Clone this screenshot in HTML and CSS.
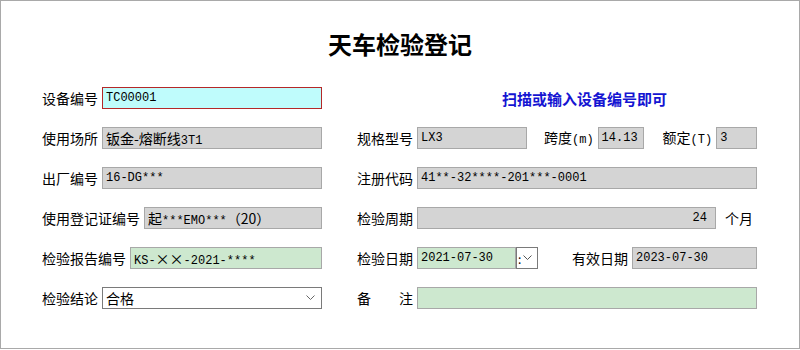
FILE: index.html
```html
<!DOCTYPE html>
<html>
	<head>
		<meta charset="utf-8">
		<title>天车检验登记</title>
		<link rel="stylesheet" href="styles.css">
	</head>
	<body>
		<div class="window">
			<h1 class="title">天车检验登记</h1>
			<div class="form">
				<div class="cell">
					<span class="label">设备编号</span>
					<div class="field cyan">TC00001</div>
				</div>
				<div class="cell">
					<span class="hint">扫描或输入设备编号即可</span>
				</div>

				<div class="cell">
					<span class="label">使用场所</span>
					<div class="field"><span class="cn">钣金-熔断线</span>3T1</div>
				</div>
				<div class="cell">
					<span class="label">规格型号</span>
					<div class="field w-type">LX3</div>
					<span class="label span-lbl">跨度<span class="unit">(m)</span></span>
					<div class="field w-small">14.13</div>
					<span class="label rated-lbl">额定<span class="unit">(T)</span></span>
					<div class="field">3</div>
				</div>

				<div class="cell">
					<span class="label">出厂编号</span>
					<div class="field">16-DG***</div>
				</div>
				<div class="cell">
					<span class="label">注册代码</span>
					<div class="field">41**-32****-201***-0001</div>
				</div>

				<div class="cell">
					<span class="label">使用登记证编号</span>
					<div class="field"><span class="cn">起</span>***EMO***<span class="cn">（20）</span></div>
				</div>
				<div class="cell">
					<span class="label">检验周期</span>
					<div class="field number">24</div>
					<span class="label months">个月</span>
				</div>

				<div class="cell">
					<span class="label">检验报告编号</span>
					<div class="field green">KS-<span class="cn">××</span>-2021-****</div>
				</div>
				<div class="cell">
					<span class="label">检验日期</span>
					<div class="field green w-date">2021-07-30</div>
					<div class="picker">
						<span class="colon">:</span>
						<svg width="9" height="6" viewBox="0 0 9 6"><path d="M0.5 0.5 L4.5 4.5 L8.5 0.5" fill="none" stroke="#555" stroke-width="1"/></svg>
					</div>
					<span class="label valid-lbl">有效日期</span>
					<div class="field">2023-07-30</div>
				</div>

				<div class="cell">
					<span class="label">检验结论</span>
					<div class="combo">
						<span>合格</span>
						<svg width="9" height="6" viewBox="0 0 9 6"><path d="M0.5 0.5 L4.5 4.5 L8.5 0.5" fill="none" stroke="#666" stroke-width="1"/></svg>
					</div>
				</div>
				<div class="cell">
					<span class="label">备　　注</span>
					<div class="field green"></div>
				</div>
			</div>
		</div>
	</body>
</html>
```

FILE: styles.css
```css
body
{
	margin: 0;
	background-color: #ffffff;
}
.window
{
	width: 800px;
	height: 349px;
	box-sizing: border-box;
	border: 1px solid #a9a9a9;
	font-family: "Noto Sans CJK SC", sans-serif;
	font-size: 14px;
	color: #000000;
}
.title
{
	margin: 28px 0 0 0;
	text-align: center;
	font-size: 24px;
	line-height: 30px;
	font-weight: bold;
}
.form
{
	display: grid;
	grid-template-columns: 280px 400px;
	column-gap: 35px;
	row-gap: 18px;
	margin: 28px 0 0 41px;
}
.cell
{
	display: flex;
	align-items: center;
	height: 22px;
}
.label
{
	white-space: nowrap;
	line-height: 22px;
	margin-right: 4px;
}
.unit
{
	font-family: "Liberation Mono", monospace;
	font-size: 12px;
}
.span-lbl
{
	margin-left: 17px;
}
.rated-lbl
{
	margin-left: 19px;
}
.months
{
	margin-left: 9px;
	margin-right: 4px;
}
.valid-lbl
{
	margin-left: 34px;
}
.hint
{
	margin-left: 145px;
	font-size: 15px;
	font-weight: bold;
	color: #1414d2;
	white-space: nowrap;
}
.field
{
	flex: 1;
	height: 22px;
	box-sizing: border-box;
	border: 1px solid #a8a8a8;
	background-color: #d4d4d4;
	padding: 0 3px;
	font-family: "Liberation Mono", monospace;
	font-size: 12px;
	line-height: 20px;
	white-space: nowrap;
	overflow: hidden;
}
.field .cn
{
	font-family: "Noto Sans CJK SC", sans-serif;
	font-size: 14px;
}
.field.cyan
{
	background-color: #bffcfc;
	border-color: #b42828;
}
.field.green
{
	background-color: #cde8cf;
}
.field.number
{
	text-align: right;
	padding-right: 8px;
}
.w-type
{
	flex: 0 0 110px;
}
.w-small
{
	flex: 0 0 46px;
}
.w-date
{
	flex: 0 0 99px;
	margin-right: 0;
}
.picker
{
	width: 22px;
	height: 22px;
	box-sizing: border-box;
	border: 1px solid #7a7a7a;
	background-color: #ffffff;
	display: flex;
	align-items: center;
	padding-left: 1px;
	gap: 2px;
	font-size: 12px;
}
.combo
{
	flex: 1;
	height: 22px;
	box-sizing: border-box;
	border: 1px solid #7a7a7a;
	background-color: #ffffff;
	display: flex;
	align-items: center;
	justify-content: space-between;
	padding: 0 6px 0 3px;
	font-size: 14px;
}
```
